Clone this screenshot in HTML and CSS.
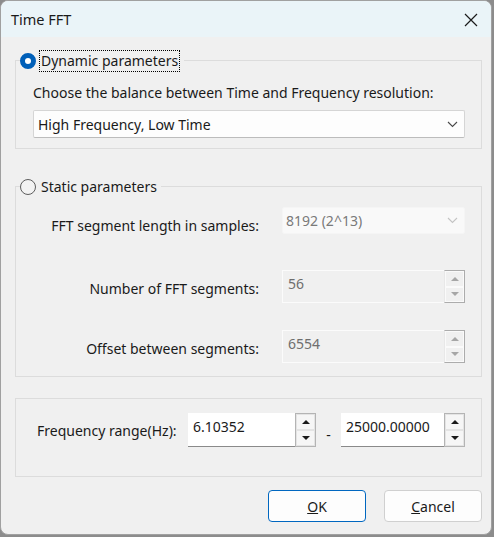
FILE: index.html
```html
<!DOCTYPE html>
<html>
<head>
<meta charset="utf-8">
<link rel="stylesheet" href="styles.css">
</head>
<body>
<div class="window">
  <div class="titlebar">
    <span class="title">Time FFT</span>
    <svg class="close" width="14" height="14" viewBox="0 0 14 14"><path d="M1 1L13 13M13 1L1 13" stroke="#1b1b1b" stroke-width="1.2" fill="none"/></svg>
  </div>
  <div class="content">
    <fieldset class="group g1">
      <legend class="legend"><span class="radio on"></span><span class="focus">Dynamic parameters</span></legend>
      <div class="inner1">
        <div class="prompt">Choose the balance between Time and Frequency resolution:</div>
        <div class="select">
          <span>High Frequency, Low Time</span>
          <svg class="chev" width="11" height="7" viewBox="0 0 11 7"><path d="M1 1L5.5 5.5L10 1" stroke="#4a4a4a" stroke-width="1.1" fill="none"/></svg>
        </div>
      </div>
    </fieldset>

    <fieldset class="group g2">
      <legend class="legend"><span class="radio"></span><span class="ltext">Static parameters</span></legend>
      <div class="grid">
        <div class="lbl r1">FFT segment length in samples:</div>
        <div class="select disabled r1i">
          <span>8192 (2^13)</span>
          <svg class="chev" width="11" height="7" viewBox="0 0 11 7"><path d="M1 1L5.5 5.5L10 1" stroke="#c4c4c4" stroke-width="1.1" fill="none"/></svg>
        </div>
        <div class="lbl r2">Number of FFT segments:</div>
        <div class="spin disabled r2i">
          <div class="field">56</div>
          <div class="btns"><div class="btn"><span class="up"></span></div><div class="btn"><span class="down"></span></div></div>
        </div>
        <div class="lbl r3">Offset between segments:</div>
        <div class="spin disabled r3i">
          <div class="field">6554</div>
          <div class="btns"><div class="btn"><span class="up"></span></div><div class="btn"><span class="down"></span></div></div>
        </div>
      </div>
    </fieldset>

    <div class="group g3">
      <div class="flabel">Frequency range(Hz):</div>
      <div class="spin s1">
        <div class="field">6.10352</div>
        <div class="btns"><div class="btn"><span class="up"></span></div><div class="btn"><span class="down"></span></div></div>
      </div>
      <div class="dash">-</div>
      <div class="spin s2">
        <div class="field">25000.00000</div>
        <div class="btns"><div class="btn"><span class="up"></span></div><div class="btn"><span class="down"></span></div></div>
      </div>
    </div>

    <div class="buttons">
      <div class="button default"><u>O</u>K</div>
      <div class="button"><u>C</u>ancel</div>
    </div>
  </div>
</div>
</body>
</html>
```
FILE: styles.css
```css
html, body {
  margin: 0;
  padding: 0;
}
body {
  background: #8c8c8c;
  font-family: "Noto Sans", "Open Sans", sans-serif;
  font-size: 14px;
  color: #1a1a1a;
  width: 494px;
  height: 537px;
  overflow: hidden;
}
.window {
  box-sizing: border-box;
  width: 492px;
  height: 535px;
  background: #f0f0f0;
  border: 1px solid #a0a0a0;
  border-radius: 8px;
  overflow: hidden;
}
.titlebar {
  height: 36px;
  background: #eaf4f8;
  display: flex;
  align-items: center;
  justify-content: space-between;
  padding: 0 13px 0 10px;
}
.title {
  font-size: 14.5px;
  color: #1a1a1a;
}
.close {
  display: block;
  margin-top: 1px;
}
.content {
  padding: 12px 9px 0 14px;
}
.group {
  margin: 0;
  padding: 0;
  border: 1px solid #dcdcdc;
  min-width: 0;
  box-sizing: border-box;
}
.legend {
  padding: 0 4px 0 0;
  margin-left: 4px;
  display: flex;
  align-items: center;
  height: 23px;
}
.radio {
  display: inline-block;
  box-sizing: border-box;
  width: 16px;
  height: 16px;
  border-radius: 50%;
  border: 1px solid #5d5d5d;
  background: #f3f3f3;
  margin-right: 3px;
}
.radio.on {
  border: 5px solid #005fb8;
  background: #ffffff;
}
.focus {
  border: 1px dotted #000;
  padding: 0 1px;
  line-height: 20px;
}
.ltext {
  padding-left: 2px;
  line-height: 20px;
}
.inner1 {
  padding: 11px 16px 10px 17px;
}
.prompt {
  line-height: 20px;
}
.select {
  box-sizing: border-box;
  margin-top: 7px;
  height: 28px;
  background: #fdfdfd;
  border: 1px solid #d5d5d5;
  border-bottom-color: #bcbcbc;
  border-radius: 2px;
  display: flex;
  align-items: center;
  justify-content: space-between;
  padding: 0 6px 0 4px;
}
.select.disabled {
  margin-top: 0;
  height: 27px;
  background: #f9f9f9;
  border: 1px solid #f5f5f5;
  color: #7a7a7a;
  padding-left: 3px;
}
.chev {
  display: block;
}
.g2 {
  margin-top: 26px;
}
.grid {
  display: grid;
  grid-template-columns: 243px 183px;
  column-gap: 23px;
  padding: 9px 0 13px 0;
}
.lbl {
  text-align: right;
  line-height: 20px;
}
.lbl.r1 { padding-top: 9px; }
.lbl.r2 { margin-top: 35px; padding-top: 8px; }
.lbl.r3 { margin-top: 27px; padding-top: 9px; }
.r2i { margin-top: 34px; }
.r3i { margin-top: 27px; }
.spin {
  display: flex;
  height: 34px;
  box-sizing: border-box;
}
.spin .field {
  flex: 1;
  background: #ffffff;
  border-bottom: 1px solid #8a8a8a;
  padding: 4px 0 0 5px;
  line-height: 20px;
}
.spin .btns {
  box-sizing: border-box;
  width: 21px;
  border: 1px solid #b4b4b4;
  display: flex;
  flex-direction: column;
  background: #f0f0f0;
}
.btn {
  flex: 1;
  border: 1px solid #e4e4e4;
  background: #f6f6f6;
  display: flex;
  align-items: center;
  justify-content: center;
}
.up {
  width: 0;
  height: 0;
  border-left: 4px solid transparent;
  border-right: 4px solid transparent;
  border-bottom: 4px solid #1a1a1a;
}
.down {
  width: 0;
  height: 0;
  border-left: 4px solid transparent;
  border-right: 4px solid transparent;
  border-top: 4px solid #1a1a1a;
}
.spin.disabled {
  height: 33px;
}
.spin.disabled .field {
  background: #f0f0f0;
  border: 1px solid #fbfbfb;
  border-right: none;
  color: #6e6e6e;
  padding: 3px 0 0 5px;
}
.spin.disabled .btns {
  border-color: #acacac;
  border-left-color: #e8e8e8;
}
.spin.disabled .btn {
  background: #f0f0f0;
  border-color: #fafafa;
}
.spin.disabled .up { border-bottom-color: #a6a6a6; }
.spin.disabled .down { border-top-color: #a6a6a6; }
.g3 {
  margin-top: 21px;
  height: 79px;
  display: flex;
  align-items: flex-start;
  padding: 14px 0 0 21px;
}
.flabel {
  padding-top: 8px;
  line-height: 20px;
  width: 151px;
}
.s1 { width: 128px; }
.s2 { width: 124px; }
.dash {
  width: 25px;
  text-align: center;
  padding-top: 12px;
  line-height: 20px;
}
.buttons {
  display: flex;
  justify-content: flex-end;
  gap: 18px;
  margin-top: 13px;
  padding-right: 0;
}
.button {
  box-sizing: border-box;
  width: 98px;
  height: 32px;
  border: 1px solid #d0d0d0;
  border-radius: 4px;
  background: #fdfdfd;
  display: flex;
  align-items: center;
  justify-content: center;
}
.button.default {
  border-color: #0067c0;
}
```
